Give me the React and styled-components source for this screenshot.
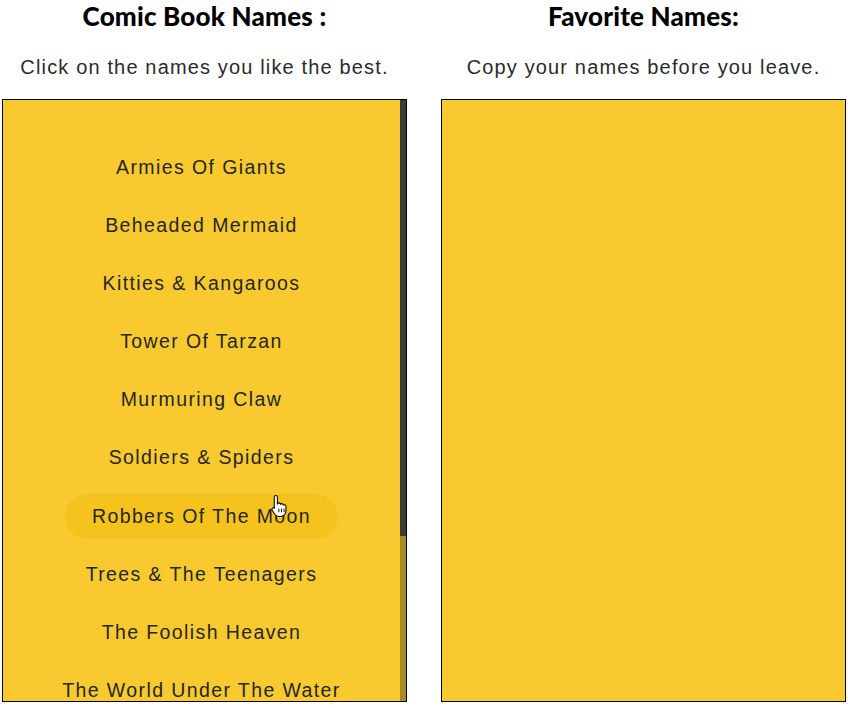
import React from "react";
import styled, { createGlobalStyle } from "styled-components";

const Global = createGlobalStyle`
  html, body { margin: 0; padding: 0; background: #fff; }
  body { font-family: "Liberation Sans", Arial, sans-serif; }
`;

const Page = styled.div`
  display: grid;
  grid-template-columns: 405px 405px;
  column-gap: 34px;
  padding: 0 2px;
  width: 848px;
  height: 708px;
  box-sizing: border-box;
`;

const Column = styled.section`
  display: flex;
  flex-direction: column;
  align-items: stretch;
`;

const Title = styled.h2`
  margin: 0;
  padding-top: 1px;
  height: 33px;
  font-family: "Lato", sans-serif;
  font-weight: 900;
  font-size: 26px;
  line-height: 30px;
  letter-spacing: 0.2px;
  color: #000;
  text-align: center;
`;

const Subtitle = styled.p`
  margin: 0;
  padding-top: 19px;
  height: 46px;
  font-family: "Liberation Sans", Arial, sans-serif;
  font-size: 20px;
  line-height: 28px;
  color: #2b2b2b;
  text-align: center;
  letter-spacing: 1.15px;
  white-space: nowrap;
`;

const Box = styled.div`
  height: 603px;
  box-sizing: border-box;
  border: 1px solid #000;
  background: #f8ca30;
  display: flex;
  overflow: hidden;
`;

const Viewport = styled.div`
  flex: 1;
  overflow: hidden;
`;

const Track = styled.div`
  width: 6px;
  background: #a58a28;
  display: flex;
  flex-direction: column;
`;

const Thumb = styled.div`
  height: 72.5%;
  background: #3b3b37;
`;

const List = styled.ul`
  list-style: none;
  margin: 0;
  padding: 44.5px 0;
  display: flex;
  flex-direction: column;
  align-items: center;
  gap: 13.2px;
`;

const Item = styled.li`
  position: relative;
  height: 45px;
  padding: 0 27px;
  display: flex;
  align-items: center;
  justify-content: center;
  border-radius: 23px;
  font-family: "Liberation Sans", Arial, sans-serif;
  font-size: 19.5px;
  letter-spacing: 1.4px;
  white-space: nowrap;
  color: #262626;
  background: ${(p) => (p.$hover ? "#f6c21d" : "transparent")};
  cursor: pointer;
`;

const Cursor = styled.svg`
  position: absolute;
  right: 50px;
  top: 0px;
  pointer-events: none;
`;

const names = [
  "Armies Of Giants",
  "Beheaded Mermaid",
  "Kitties & Kangaroos",
  "Tower Of Tarzan",
  "Murmuring Claw",
  "Soldiers & Spiders",
  "Robbers Of The Moon",
  "Trees & The Teenagers",
  "The Foolish Heaven",
  "The World Under The Water",
  "Heroes Of The Night",
  "Snakes & Sisters",
  "Curse Of The Witch",
];

const Hand = () => (
  <Cursor width="17" height="23" viewBox="0 0 16 22">
    <path
      d="M4.5 1.5c.8 0 1.5.7 1.5 1.5v6.2c.3-.4.8-.7 1.4-.7.8 0 1.4.5 1.5 1.2.3-.3.7-.5 1.2-.5.8 0 1.4.6 1.5 1.3.3-.2.6-.3 1-.3.9 0 1.6.7 1.6 1.6v4.4c0 2.9-2.2 5.3-5.2 5.3H7.3c-1.6 0-2.9-.8-3.8-2.1L1 15.6c-.5-.8-.3-1.8.5-2.2.7-.4 1.5-.2 1.9.4L3 13V3c0-.8.7-1.5 1.5-1.5z"
      fill="#fff"
      stroke="#000"
      strokeWidth="1"
    />
    <path d="M7.4 14v3.5M9.9 14v3.5M12.4 14v3.5" stroke="#000" strokeWidth="0.9" />
  </Cursor>
);

export default function App() {
  return (
    <>
      <Global />
      <Page>
        <Column>
          <Title>Comic Book Names :</Title>
          <Subtitle>Click on the names you like the best.</Subtitle>
          <Box>
            <Viewport>
              <List>
                {names.map((n) => (
                  <Item key={n} $hover={n === "Robbers Of The Moon"}>
                    {n}
                    {n === "Robbers Of The Moon" && <Hand />}
                  </Item>
                ))}
              </List>
            </Viewport>
            <Track>
              <Thumb />
            </Track>
          </Box>
        </Column>
        <Column>
          <Title>Favorite Names:</Title>
          <Subtitle>Copy your names before you leave.</Subtitle>
          <Box />
        </Column>
      </Page>
    </>
  );
}
